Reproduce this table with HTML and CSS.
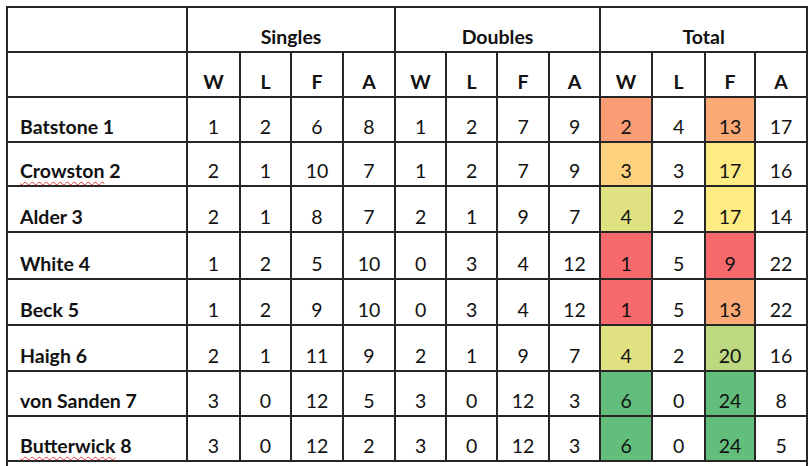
FILE: index.html
```html
<!DOCTYPE html>
<html>
<head>
<meta charset="utf-8">
<link rel="stylesheet" href="styles.css">
</head>
<body>
<table class="sheet">
  <colgroup>
    <col class="c-name">
    <col class="c53"><col class="c51"><col class="c52"><col class="c52">
    <col class="c51"><col class="c51"><col class="c52"><col class="c51">
    <col class="c52"><col class="c53"><col class="c50"><col class="c52">
  </colgroup>
  <tr class="r45 head">
    <td></td>
    <td colspan="4">Singles</td>
    <td colspan="4">Doubles</td>
    <td colspan="4">Total</td>
  </tr>
  <tr class="r45 head">
    <td></td>
    <td>W</td><td>L</td><td>F</td><td>A</td>
    <td>W</td><td>L</td><td>F</td><td>A</td>
    <td>W</td><td>L</td><td>F</td><td>A</td>
  </tr>
  <tr class="r45">
    <td class="name">Batstone 1</td>
    <td>1</td><td>2</td><td>6</td><td>8</td>
    <td>1</td><td>2</td><td>7</td><td>9</td>
    <td class="w2">2</td><td>4</td><td class="f13">13</td><td>17</td>
  </tr>
  <tr class="r44">
    <td class="name"><span class="spell">Crowston</span> 2</td>
    <td>2</td><td>1</td><td>10</td><td>7</td>
    <td>1</td><td>2</td><td>7</td><td>9</td>
    <td class="w3">3</td><td>3</td><td class="f17">17</td><td>16</td>
  </tr>
  <tr class="r46">
    <td class="name">Alder 3</td>
    <td>2</td><td>1</td><td>8</td><td>7</td>
    <td>2</td><td>1</td><td>9</td><td>7</td>
    <td class="w4">4</td><td>2</td><td class="f17">17</td><td>14</td>
  </tr>
  <tr class="r47">
    <td class="name">White 4</td>
    <td>1</td><td>2</td><td>5</td><td>10</td>
    <td>0</td><td>3</td><td>4</td><td>12</td>
    <td class="w1">1</td><td>5</td><td class="f9">9</td><td>22</td>
  </tr>
  <tr class="r46">
    <td class="name">Beck 5</td>
    <td>1</td><td>2</td><td>9</td><td>10</td>
    <td>0</td><td>3</td><td>4</td><td>12</td>
    <td class="w1">1</td><td>5</td><td class="f13">13</td><td>22</td>
  </tr>
  <tr class="r46">
    <td class="name">Haigh 6</td>
    <td>2</td><td>1</td><td>11</td><td>9</td>
    <td>2</td><td>1</td><td>9</td><td>7</td>
    <td class="w4">4</td><td>2</td><td class="f20">20</td><td>16</td>
  </tr>
  <tr class="r45">
    <td class="name">von Sanden 7</td>
    <td>3</td><td>0</td><td>12</td><td>5</td>
    <td>3</td><td>0</td><td>12</td><td>3</td>
    <td class="w6">6</td><td>0</td><td class="f24">24</td><td>8</td>
  </tr>
  <tr class="r45">
    <td class="name"><span class="spell">Butterwick</span> 8</td>
    <td>3</td><td>0</td><td>12</td><td>2</td>
    <td>3</td><td>0</td><td>12</td><td>3</td>
    <td class="w6">6</td><td>0</td><td class="f24">24</td><td>5</td>
  </tr>
  <tr class="tail">
    <td colspan="13"></td>
  </tr>
</table>
</body>
</html>
```

FILE: styles.css
```css
html, body {
  margin: 0;
  padding: 0;
  background: #ffffff;
}

body {
  padding: 6px 0 0 6px;
  font-family: "Lato", "Carlito", "Liberation Sans", sans-serif;
  color: #111111;
  overflow: hidden;
}

.sheet {
  border-collapse: collapse;
  table-layout: fixed;
  width: 802px;
}

.c-name { width: 180px; }
.c50 { width: 50px; }
.c51 { width: 51px; }
.c52 { width: 52px; }
.c53 { width: 53px; }

.sheet td {
  border: 2px solid #262626;
  padding: 0 0 3px 0;
  text-align: center;
  vertical-align: bottom;
  font-size: 19.5px;
  line-height: 22px;
  white-space: nowrap;
}

.r44 { height: 44px; }
.r45 { height: 45px; }
.r46 { height: 46px; }
.r47 { height: 47px; }

.head td {
  font-weight: bold;
}

.sheet td.name {
  text-align: left;
  padding-left: 12px;
  font-weight: bold;
}

.spell {
  text-decoration: underline wavy #e23a3a;
  text-decoration-thickness: 1px;
  text-underline-offset: 3px;
}

.tail td {
  height: 20px;
  border-bottom: none;
}

.w1, .f9 { background: #f8696b; }
.w2 { background: #fa9d75; }
.w3 { background: #fed17f; }
.w4 { background: #e0e282; }
.w6, .f24 { background: #63be7b; }
.f13 { background: #fbaa77; }
.f17 { background: #ffeb84; }
.f20 { background: #bcd880; }
```
